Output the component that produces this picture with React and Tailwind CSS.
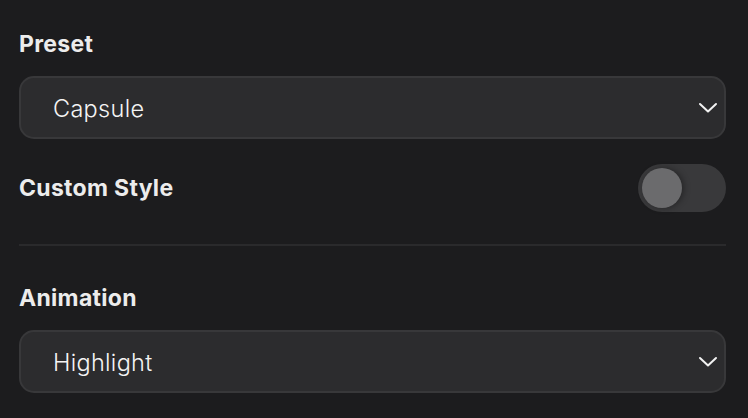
const Chevron = () => (
  <svg width="20" height="12" viewBox="0 0 20 12" fill="none" className="shrink-0">
    <polyline
      points="2,2 10,9.5 18,2"
      stroke="#f2f2f2"
      strokeWidth="2"
      strokeLinecap="round"
      strokeLinejoin="round"
    />
  </svg>
);

const Select = ({ value }) => (
  <div className="flex h-[63px] items-center justify-between rounded-[15px] border-2 border-[#38383a] bg-[#2c2c2e] pl-[32px] pr-[6px]">
    <span className="pt-[2px] text-[23.5px] font-light tracking-[0.3px] text-[#f4f4f4]">{value}</span>
    <Chevron />
  </div>
);

const Label = ({ children }) => (
  <h2 className="text-[23px] font-bold leading-[28px] tracking-[0.3px] text-[#ececec]">
    {children}
  </h2>
);

export default function App() {
  return (
    <div
      className="h-[418px] w-[748px] overflow-hidden bg-[#1c1c1e] pl-[19px] pr-[22px] pt-[30px]"
      style={{ fontFamily: "Inter, 'Noto Sans', sans-serif" }}
    >
      <Label>Preset</Label>
      <div className="mt-[18px]">
        <Select value="Capsule" />
      </div>

      <div className="mt-[25px] flex items-center justify-between">
        <Label>Custom Style</Label>
        <div className="flex h-[48px] w-[88px] items-center rounded-full bg-[#39393b] px-[4px]">
          <div className="h-[40px] w-[40px] rounded-full bg-[#6b6b6d] shadow-[2px_0_6px_rgba(0,0,0,0.35)]" />
        </div>
      </div>

      <div className="mt-[32px] h-[2px] bg-[#2a2a2c]" />

      <div className="mt-[38px]">
        <Label>Animation</Label>
      </div>
      <div className="mt-[18px]">
        <Select value="Highlight" />
      </div>
    </div>
  );
}
